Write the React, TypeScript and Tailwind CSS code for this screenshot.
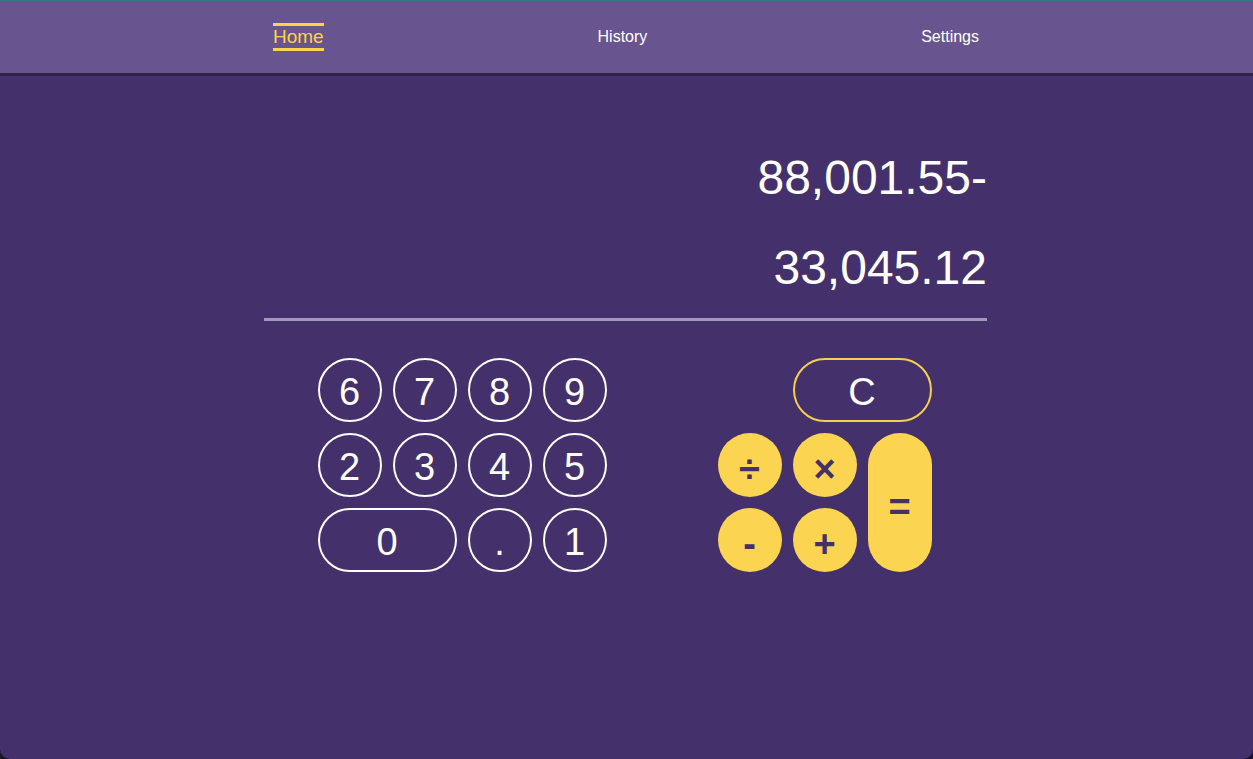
import type { ReactNode } from 'react';

const font = { fontFamily: '"Liberation Sans", Arial, sans-serif' };

function Key({ children, wide }: { children: ReactNode; wide?: boolean }) {
  return (
    <button
      className={`h-16 ${wide ? 'col-span-2 w-[139px]' : 'w-16'} rounded-full border-2 border-white pt-[4px] text-[38px] leading-none text-white flex items-center justify-center`}
    >
      {children}
    </button>
  );
}

function Op({ children, tall }: { children: ReactNode; tall?: boolean }) {
  return (
    <button
      className={`w-16 ${tall ? 'row-span-2 h-[139px]' : 'h-16'} rounded-full bg-[#fbd551] pt-[8px] text-[38px] font-bold leading-none text-[#44316b] flex items-center justify-center`}
    >
      {children}
    </button>
  );
}

export default function App() {
  return (
    <div className="bg-[#1a1526]" style={font}>
      <div className="h-[759px] flex flex-col bg-[#44316b] rounded-b-[10px] overflow-hidden">
        <header className="h-[76px] shrink-0 border-t border-[#2f7a80] bg-[#68548f] border-b-[3px] border-b-[#2e2346]">
          <nav className="mx-auto w-[707px] h-full flex items-center justify-between text-[16px] pr-[1px]">
            <a className="text-[#fcd34d] text-[19px] border-y-[3px] border-[#fcd34d] leading-[22px]">Home</a>
            <a className="text-white">History</a>
            <a className="text-white">Settings</a>
          </nav>
        </header>

        <main className="flex flex-col items-center pr-[2px]">
          <div className="w-[723px] text-right text-white text-[48px] leading-none pt-[78px] pb-[26px] border-b-[3px] border-[#a198b8] flex flex-col gap-[42px]">
            <div>88,001.55-</div>
            <div>33,045.12</div>
          </div>

          <div className="mt-[37px] mr-[2px] flex gap-[111px]">
            <div className="grid grid-cols-4 gap-[11px]">
              <Key>6</Key>
              <Key>7</Key>
              <Key>8</Key>
              <Key>9</Key>
              <Key>2</Key>
              <Key>3</Key>
              <Key>4</Key>
              <Key>5</Key>
              <Key wide>0</Key>
              <Key>.</Key>
              <Key>1</Key>
            </div>

            <div className="grid grid-cols-3 gap-[11px]">
              <div className="col-start-2 col-span-2 h-16 rounded-full border-2 border-[#f5cf50] pt-[4px] text-white text-[38px] leading-none flex items-center justify-center">
                C
              </div>
              <Op>÷</Op>
              <Op>×</Op>
              <Op tall>=</Op>
              <Op>-</Op>
              <Op>+</Op>
            </div>
          </div>
        </main>
      </div>
    </div>
  );
}
